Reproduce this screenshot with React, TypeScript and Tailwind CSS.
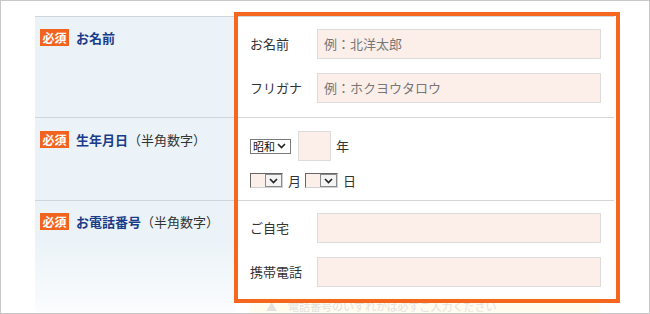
import React from "react";

const jp = "font-['Meiryo','Noto_Sans_CJK_JP',sans-serif]";

const Badge = () => (
  <span className="flex h-[17px] w-[29px] items-center justify-center bg-[#f1641f] text-[12px] font-bold leading-none text-white">
    必須
  </span>
);

const Chevron = () => (
  <svg width="9" height="6" viewBox="0 0 9 6" className="block">
    <path d="M1 1l3.5 3.5L8 1" fill="none" stroke="#222" strokeWidth="1.6" />
  </svg>
);

const TextBox = ({ placeholder }: { placeholder?: string }) => (
  <div className="flex h-[30px] w-[284px] items-center border border-[#dcdcdc] bg-[#fcefea] pl-[6px] text-[13px] text-[#777]">
    {placeholder}
  </div>
);

const SmallSelect = () => (
  <div className="flex h-[15px] w-[33px] border border-t-[#666] border-l-[#666] border-r-[#d0d0d0] border-b-[#d0d0d0] bg-[#fcefea]">
    <div className="flex-1" />
    <div className="flex w-[17px] items-center justify-center border border-[#8a8a8a] bg-[#f4f4f4]">
      <Chevron />
    </div>
  </div>
);

const LeftCell = ({
  title,
  note,
  className = "",
}: {
  title: string;
  note?: string;
  className?: string;
}) => (
  <div className={`flex items-start gap-[7px] pl-[5px] ${className}`}>
    <Badge />
    <p className="flex h-[17px] items-center text-[13px] leading-none">
      <span className="font-bold text-[#1b3c8a]">{title}</span>
      {note && <span className="text-[#333]">{note}</span>}
    </p>
  </div>
);

const FieldRow = ({ label, placeholder }: { label: string; placeholder?: string }) => (
  <div className="flex items-center">
    <span className="w-[67px] text-[13px] text-[#333]">{label}</span>
    <TextBox placeholder={placeholder} />
  </div>
);

export default function App() {
  return (
    <div className={`relative h-[314px] w-[650px] overflow-hidden border border-[#c8c8c8] bg-white ${jp}`}>
      <div className="pl-[34px] pt-[15px]">
        <div className="grid w-[579px] grid-cols-[201px_378px] border-t border-[#cfd6dc]">
          {/* お名前 */}
          <LeftCell title="お名前" className="h-[101px] border-b border-[#cfd6dc] bg-[#ebf3f8] pt-[12px]" />
          <div className="flex h-[101px] flex-col gap-[14px] border-b border-[#d4d4d4] pl-[14px] pt-[12px]">
            <FieldRow label="お名前" placeholder="例：北洋太郎" />
            <FieldRow label="フリガナ" placeholder="例：ホクヨウタロウ" />
          </div>

          {/* 生年月日 */}
          <LeftCell
            title="生年月日"
            note="（半角数字）"
            className="h-[83px] border-b border-[#cfd6dc] bg-[#ebf3f8] pt-[13px]"
          />
          <div className="flex h-[83px] flex-col gap-[10px] border-b border-[#d4d4d4] pl-[14px] pt-[13px] text-[13px] text-[#333]">
            <div className="flex items-center">
              <div className="flex h-[15px] w-[41px] items-center justify-between border border-[#7a7a7a] bg-white pl-[2px] pr-[4px] text-[11px] leading-none text-[#111]">
                昭和
                <Chevron />
              </div>
              <div className="ml-[7px] h-[30px] w-[33px] border border-[#dcdcdc] bg-[#fcefea]" />
              <span className="ml-[5px]">年</span>
            </div>
            <div className="flex items-center">
              <SmallSelect />
              <span className="ml-[5px] mr-[4px]">月</span>
              <SmallSelect />
              <span className="ml-[5px]">日</span>
            </div>
          </div>

          {/* お電話番号 */}
          <LeftCell
            title="お電話番号"
            note="（半角数字）"
            className="h-[96px] bg-linear-to-b from-[#ebf3f8] from-40% to-[#f7fafc] pt-[12px]"
          />
          <div className="flex h-[96px] flex-col gap-[14px] pl-[14px] pt-[12px]">
            <FieldRow label="ご自宅" />
            <FieldRow label="携帯電話" />
          </div>

          <div className="h-[30px] bg-linear-to-b from-[#f7fafc] to-white" />
          <div className="mx-[14px] h-[30px] bg-[#fffcf0] pl-[16px] pt-[4px] text-[11px] leading-none text-[#e2e2e2]">
            ▲　電話番号のいずれかは必ずご入力ください
          </div>
        </div>
      </div>

      {/* highlight */}
      <div className="pointer-events-none absolute left-[233px] top-[11px] h-[291px] w-[386px] border-4 border-[#f5661e]" />
    </div>
  );
}
